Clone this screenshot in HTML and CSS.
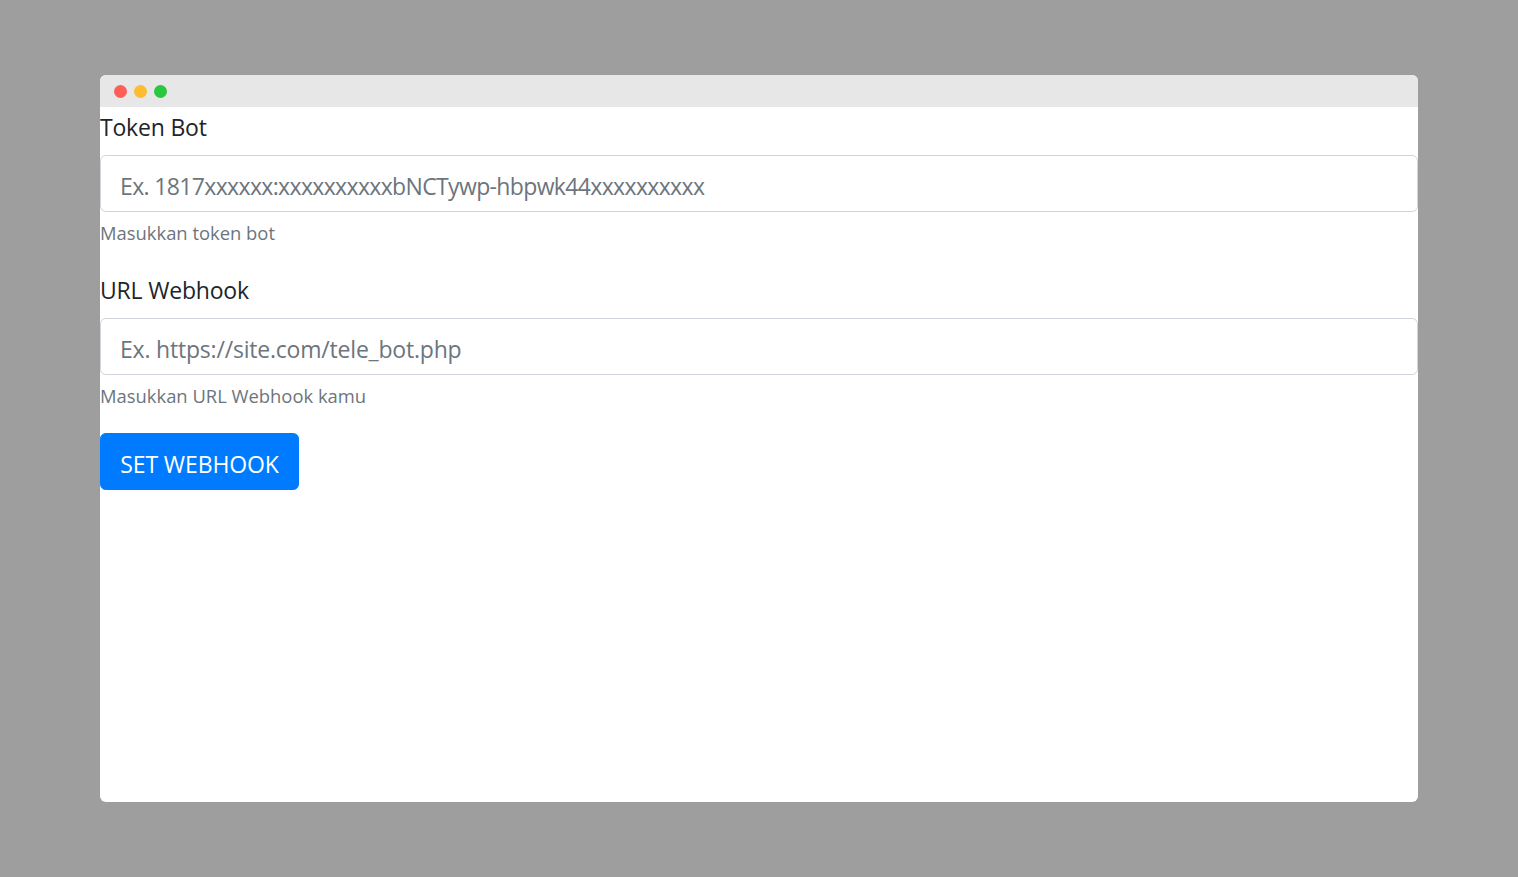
FILE: index.html
```html
<!DOCTYPE html>
<html lang="id">
<head>
<meta charset="utf-8">
<title>Set Webhook</title>
<link rel="stylesheet" href="styles.css">
</head>
<body>
<div class="window">
  <div class="titlebar">
    <span class="dot dot-red"></span>
    <span class="dot dot-yellow"></span>
    <span class="dot dot-green"></span>
  </div>
  <form class="content">
    <div class="form-group">
      <label class="label" for="token">Token Bot</label>
      <input class="input input-token" id="token" type="text" placeholder="Ex. 1817xxxxxx:xxxxxxxxxxbNCTywp-hbpwk44xxxxxxxxxx">
      <small class="help">Masukkan token bot</small>
    </div>
    <div class="form-group">
      <label class="label" for="url">URL Webhook</label>
      <input class="input" id="url" type="text" placeholder="Ex. https://site.com/tele_bot.php">
      <small class="help">Masukkan URL Webhook kamu</small>
    </div>
    <button class="btn" type="button">SET WEBHOOK</button>
  </form>
</div>
</body>
</html>
```

FILE: styles.css
```css
* { box-sizing: border-box; }
html, body { margin: 0; padding: 0; }
body {
  background: #9e9e9e;
  font-family: "Open Sans", "Noto Sans", sans-serif;
  color: #212529;
  padding: 75px 100px;
  height: 877px;
}
.window {
  background: #fff;
  border-radius: 6px;
  height: 727px;
  overflow: hidden;
}
.titlebar {
  height: 32px;
  background: #e7e7e7;
  display: flex;
  align-items: center;
  gap: 7px;
  padding-left: 13.5px;
  padding-top: 1px;
}
.dot {
  width: 13px;
  height: 13px;
  border-radius: 50%;
  display: block;
}
.dot-red { background: #ff5f57; }
.dot-yellow { background: #febc2e; }
.dot-green { background: #28c840; }
.content { display: flex; flex-direction: column; align-items: flex-start; }
.form-group {
  display: flex;
  flex-direction: column;
  align-self: stretch;
  margin-bottom: 22.5px;
}
.label {
  font-size: 23px;
  letter-spacing: -0.2px;
  line-height: 36px;
  padding-top: 2px;
  margin-bottom: 10px;
}
.input {
  height: 57px;
  border: 1px solid #ced4da;
  border-radius: 5.76px;
  padding: 4px 19px 0;
  font-family: inherit;
  font-size: 23px;
  letter-spacing: -0.2px;
  color: #495057;
  outline: none;
}
.input-token { letter-spacing: -0.64px; }
.input::placeholder { color: #6c757d; opacity: 1; }
.help {
  margin-top: 6.8px;
  font-size: 18.4px;
  line-height: 28.8px;
  color: #6c757d;
}
.btn {
  height: 57px;
  padding: 4px 19.2px 0;
  background: #007bff;
  color: #fff;
  border: 1px solid #007bff;
  border-radius: 5.76px;
  font-family: inherit;
  font-size: 23px;
  letter-spacing: -0.1px;
  cursor: pointer;
}
```
